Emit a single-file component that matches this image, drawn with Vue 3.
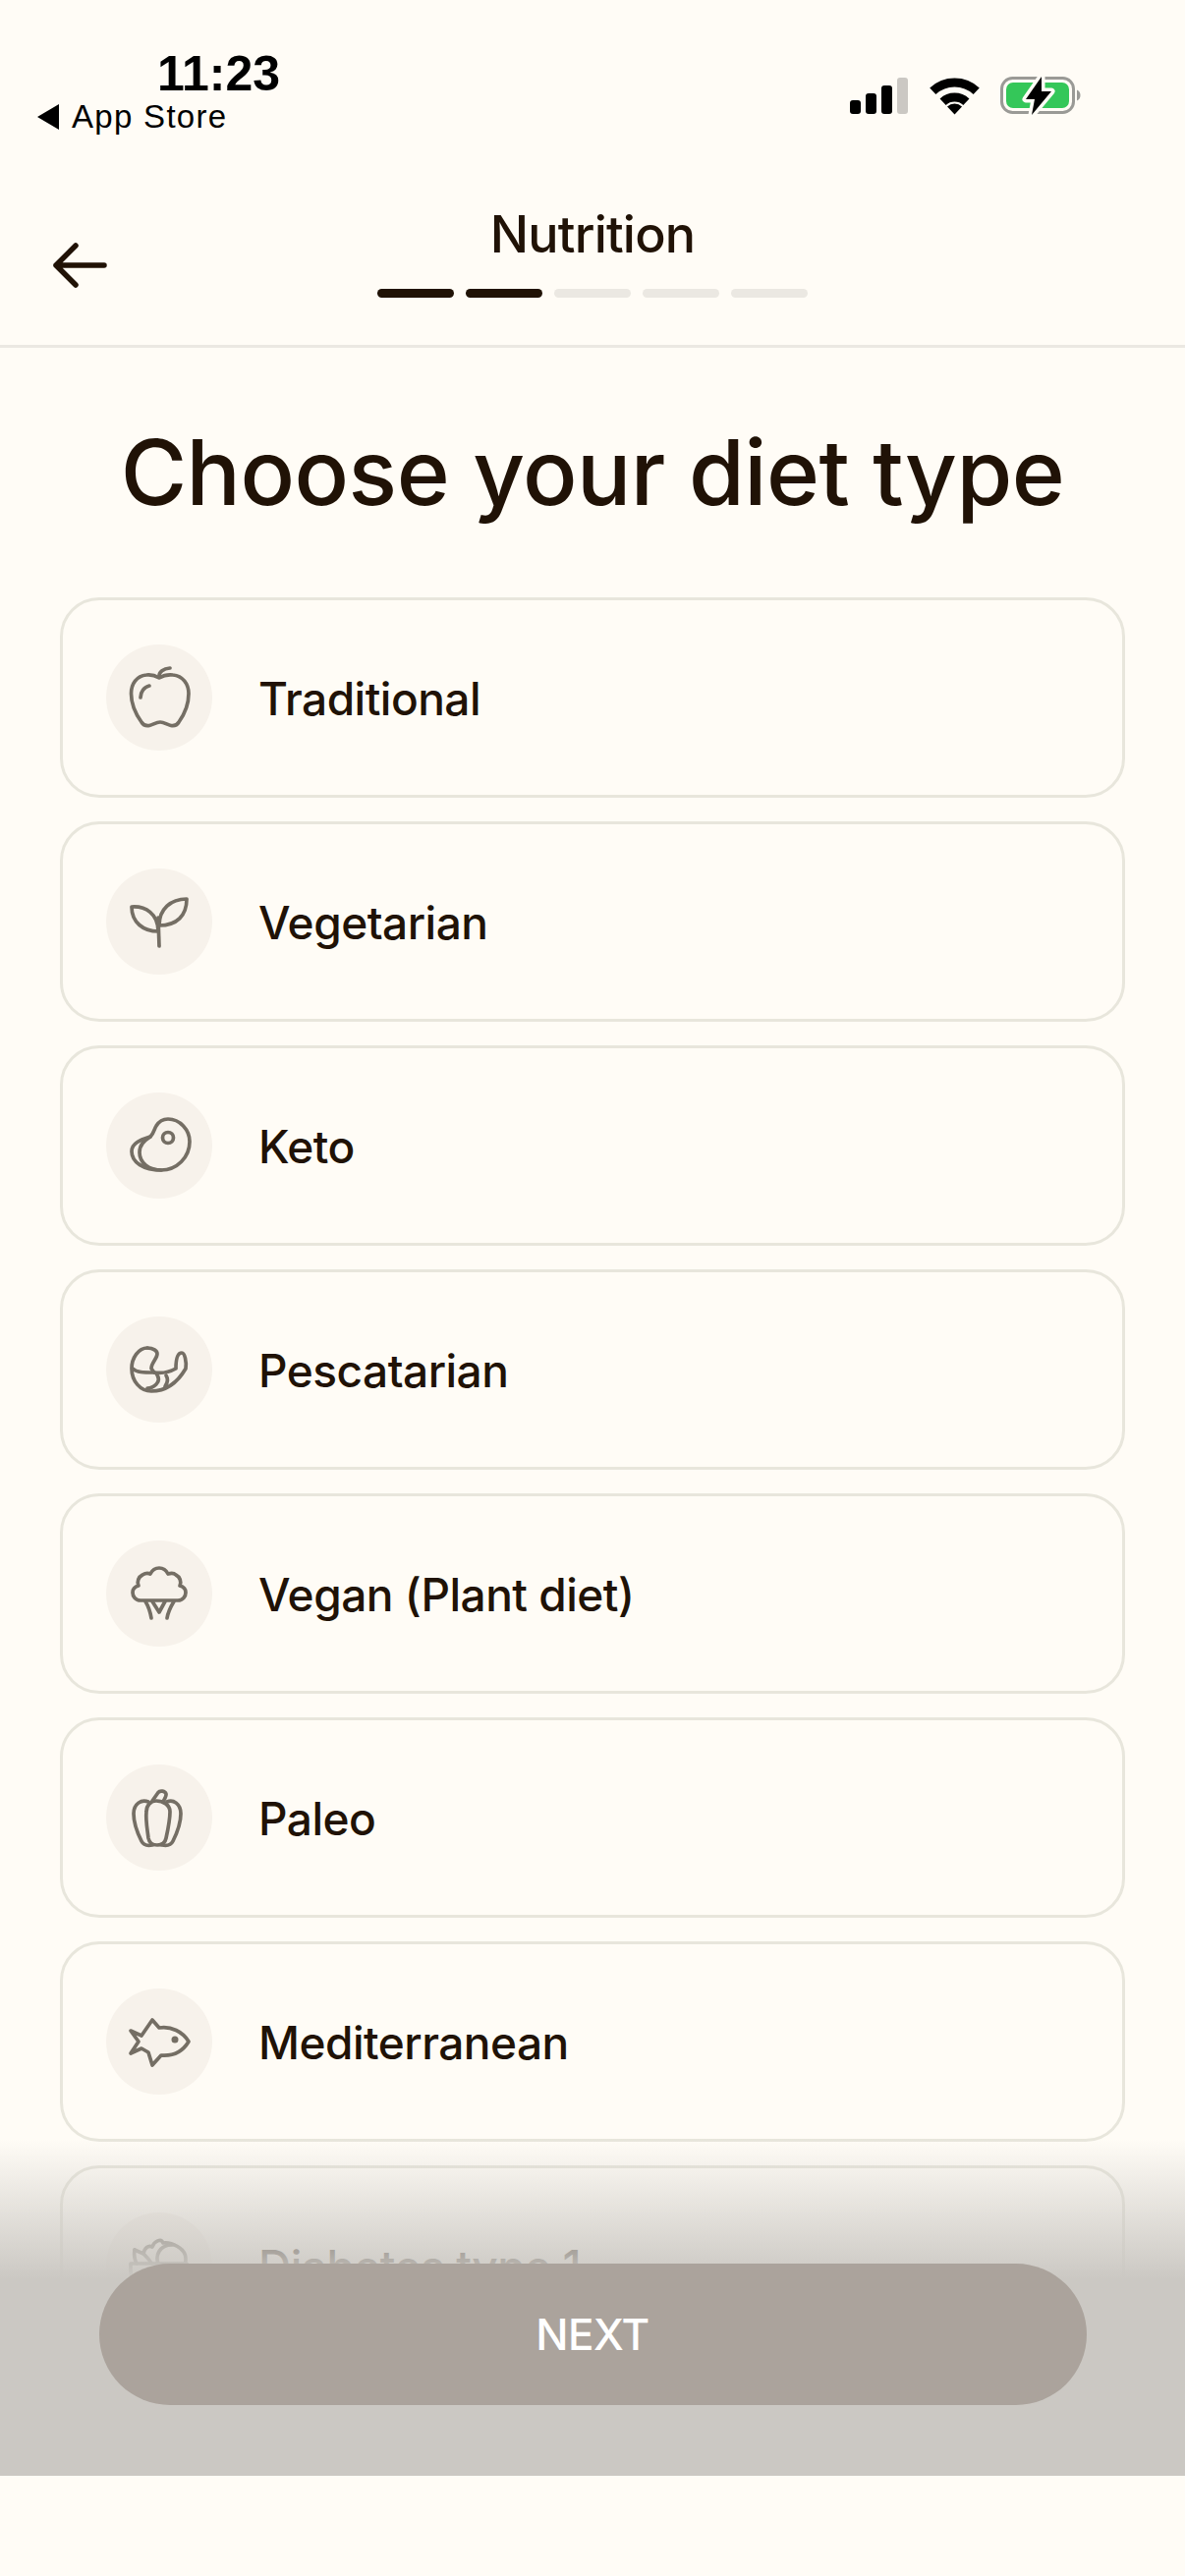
<template>
    <div class="page">
        <header class="top">
            <div class="status">
                <div class="status-left">
                    <div class="time">11:23</div>
                    <div class="back-app">
                        <span class="back-tri"></span>
                        <span>App Store</span>
                    </div>
                </div>
                <div class="status-right">
                    <div class="signal">
                        <i class="bar b1"></i>
                        <i class="bar b2"></i>
                        <i class="bar b3"></i>
                        <i class="bar b4"></i>
                    </div>
                    <svg class="wifi" width="51" height="38" viewBox="0 0 51 38">
                        <path d="M3.3 13.7A32.5 32.5 0 0 1 47.7 13.7" fill="none" stroke="#000" stroke-width="9" />
                        <path d="M13.6 24.7A17.5 17.5 0 0 1 37.4 24.7" fill="none" stroke="#000" stroke-width="9" />
                        <path d="M25.5 37.5L18 29.5A11 11 0 0 1 33 29.5Z" fill="#000" />
                    </svg>
                    <svg class="battery" width="84" height="48" viewBox="0 0 84 48">
                        <rect x="1.500" y="6.500" width="73" height="35" rx="11" fill="none" stroke="#9a9a96" stroke-width="3" />
                        <rect x="6" y="11" width="64" height="26" rx="7" fill="#34c759" />
                        <path d="M78 18.500C80.500 19.500 81.500 21.500 81.500 24C81.500 26.500 80.500 28.500 78 29.500Z" fill="#9a9a96" />
                        <path d="M42 5L26 28H35L32 44L52 20H42Z" fill="#000" stroke="#fffcf6" stroke-width="7" stroke-linejoin="round" paint-order="stroke" />
                    </svg>
                </div>
            </div>
            <nav class="nav">
                <svg class="arrow" width="60" height="48" viewBox="0 0 60 48">
                    <path d="M55 24H6M26 4L6 24L26 44" fill="none" stroke="#201206" stroke-width="5.500" stroke-linecap="round" stroke-linejoin="round" />
                </svg>
                <div class="nav-title">Nutrition</div>
                <div class="steps">
                    <i v-for="n in 5" :key="n" class="step" :class="{ done: n <= 2 }"></i>
                </div>
            </nav>
        </header>

        <main class="content">
            <h1 class="heading">Choose your diet type</h1>
            <div class="list">
                <div v-for="diet in diets" :key="diet.name" class="card">
                    <div class="icon-wrap">
                        <svg width="108" height="108" viewBox="0 0 108 108" fill="none" stroke="#746e64" stroke-width="3.700"
                            stroke-linecap="round" stroke-linejoin="round">
                            <path v-for="d in diet.paths" :key="d" :d="d" />
                            <circle v-if="diet.ring" :cx="diet.ring[0]" :cy="diet.ring[1]" :r="diet.ring[2]" />
                            <circle v-if="diet.dot" :cx="diet.dot[0]" :cy="diet.dot[1]" :r="diet.dot[2]" fill="#746e64" stroke="none" />
                        </svg>
                    </div>
                    <span class="card-label">{{ diet.name }}</span>
                </div>
            </div>
        </main>

        <footer class="bottom">
            <div class="fade">
                <button class="next">NEXT</button>
            </div>
            <div class="safe"></div>
        </footer>
    </div>
</template>

<script setup>
const diets = [
    {
        name: 'Traditional',
        paths: [
            'M54 34C49 31 45 30.500 41 31C31 32 25.500 40 25.500 50C25.500 61 31 72 36 79C38 82.500 41 83 44 82.500C48 81.500 51 79 55 79C59 79 62 81.500 66 82.500C69 83 72 82.500 74 79C79 72 84 61 84 50C84 40 78 32 68 31C64 30.500 59 31 54 34Z',
            'M54 32C54 28 58 24.500 65 24',
            'M35 54C35 48 39 43 44 42',
        ],
    },
    {
        name: 'Vegetarian',
        paths: [
            'M26 39C40 38 53 46 53 64C38 64 26 55 26 39Z',
            'M82 31C66 31 54 41 54 58C72 58 82 48 82 31Z',
            'M53 50L54 79',
        ],
    },
    {
        name: 'Keto',
        paths: [
            'M45 45C49 41 49 37 51 34C54 29 58 27 63 27C75 27 85 38 85 50C85 66 72 79 56 79C44 79 34 72 34 61C34 53 39 49 45 45Z',
            'M45 45C36 48 26 51 26 60C26 71 38 79 56 79',
        ],
        ring: [63, 46, 5.5],
    },
    {
        name: 'Pescatarian',
        paths: [
            'M42 32C33 32 26 42 26 53C26 66 35 76 46 76C58 76 71 70 81 53C82 46 80 37 77 37C72 37 71 44 71 53C62 58 56 58 49 57C38 57 31 57 27 53',
            'M42 32C48 32 52 35 52 38C52 43 46 47 46 53L49 57',
            'M51 58C54 62 54 66 51 69C48 72 45 73 42 73',
            'M61 60C63 63 63 67 60 71',
        ],
    },
    {
        name: 'Vegan (Plant diet)',
        paths: [
            'M35 61C30 61 27 57 27 53C27 49 29 47 33 46C31 42 33 37 37 35C40 33 43 33 45 34C47 30 50 28 54 28C58 28 61 30 63 34C66 33 69 33 71 35C75 37 77 42 75 46C79 47 81 49 81 53C81 57 78 61 73 61Z',
            'M40 62C43 67 45 73 46 79',
            'M69 62C66 67 63 73 62 79',
            'M47 62L54 73L60 62',
        ],
    },
    {
        name: 'Paleo',
        paths: [
            'M41 48C41 41 46 37 51 37C58 37 65 41 65 48C65 57 63 66 61 75C60 80 56 82 52 82C47 82 44 80 43 75C42 66 40 57 41 48Z',
            'M43 38C36 35 28 40 28 50C28 60 32 70 36 78C38 82 42 83 47 82',
            'M62 38C68 35 76 40 76 50C76 60 72 70 68 78C66 82 62 83 57 82',
            'M47 37L53 28.500C55 26 60 27 61 30C61.500 32 60 34 58 38',
        ],
    },
    {
        name: 'Mediterranean',
        paths: [
            'M25 43L36 48L47 32L54 40C66 38 78 44 84 54C78 64 68 69 56 68L47 78L43 65L36 61L25 66L33 54Z',
        ],
        dot: [70, 52, 3.5],
    },
    {
        name: 'Diabetes type 1',
        paths: [
            'M29 38L38 42C39 36 43 33 47 35C49 29 56 26 58 31C66 30 81 36 81 47C81 50 81 51 80 52',
            'M53 52C50 44 54 33 67 33',
            'M38 42C42 46 45 49 46 52',
            'M29 38C28 44 29 48 31 52',
            'M25 52H82V60C82 72 70 82 54 82C38 82 25 72 25 60Z',
        ],
    },
];
</script>

<style scoped>
.page {
    position: relative;
    width: 1206px;
    height: 2622px;
    overflow: hidden;
    background-color: #fffcf6;
    color: #201206;
    font-family: Inter, "Liberation Sans", sans-serif;
}

.top {
    border-bottom: 3px solid #ebe8e2;
}

.status {
    display: flex;
    justify-content: space-between;
    height: 190px;
    box-sizing: border-box;
    padding: 45px 0 0 38px;
    color: #000;
    font-family: "Liberation Sans", Arial, sans-serif;
}

.status-left {
    display: flex;
    flex-direction: column;
}

.time {
    margin-left: 122px;
    font-size: 50px;
    line-height: 60px;
    font-weight: 700;
}

.back-app {
    display: flex;
    align-items: center;
    gap: 13px;
    margin-top: -4px;
    font-size: 33px;
    line-height: 36px;
    letter-spacing: 1.300px;
}

.back-tri {
    width: 0;
    height: 0;
    border-top: 13px solid transparent;
    border-bottom: 13px solid transparent;
    border-right: 22px solid #000;
}

.status-right {
    display: flex;
    align-items: flex-start;
    padding: 33px 0 0;
    margin-right: 104px;
}

.signal {
    display: flex;
    align-items: flex-end;
    gap: 5px;
    height: 37px;
    margin-right: 22px;
    margin-top: 1px;
}

.bar {
    display: block;
    width: 11px;
    border-radius: 3px;
    background-color: #000;
}

.b1 { height: 14px; }
.b2 { height: 21px; }
.b3 { height: 29px; }
.b4 { height: 37px; background-color: #cbc8c3; }

.wifi {
    margin-top: 1px;
    margin-right: 21px;
}

.battery {
    margin-top: -5px;
}

.nav {
    position: relative;
    display: flex;
    flex-direction: column;
    align-items: center;
    height: 161px;
}

.arrow {
    position: absolute;
    left: 51px;
    top: 56px;
}

.nav-title {
    margin-top: 17px;
    font-size: 52px;
    line-height: 64px;
    font-weight: 450;
    letter-spacing: -0.800px;
}

.steps {
    display: flex;
    gap: 12px;
    margin-top: 23px;
}

.step {
    display: block;
    width: 78px;
    height: 9px;
    border-radius: 5px;
    background-color: #ebe8e2;
}

.step.done {
    background-color: #201206;
}

.content {
    padding: 0 61px;
}

.heading {
    margin: 65px 0 0;
    text-align: center;
    font-size: 92px;
    line-height: 124px;
    font-weight: 450;
    letter-spacing: -0.500px;
}

.list {
    display: flex;
    flex-direction: column;
    gap: 24px;
    margin-top: 65px;
}

.card {
    display: flex;
    flex-shrink: 0;
    align-items: center;
    gap: 47px;
    height: 204px;
    box-sizing: border-box;
    padding-left: 44px;
    border: 3px solid #e8e6dc;
    border-radius: 40px;
}

.icon-wrap {
    width: 108px;
    height: 108px;
    flex-shrink: 0;
    border-radius: 50%;
    background-color: #f7f2eb;
}

.icon-wrap svg {
    display: block;
}

.card-label {
    padding-top: 2px;
    font-size: 46px;
    font-weight: 450;
    letter-spacing: -0.500px;
}

.bottom {
    position: absolute;
    left: 0;
    right: 0;
    bottom: 0;
}

.fade {
    display: flex;
    justify-content: center;
    height: 343px;
    box-sizing: border-box;
    padding-top: 127px;
    background: linear-gradient(to bottom, rgba(203, 200, 195, 0), #cbc8c3 143px);
}

.next {
    width: 1005px;
    height: 144px;
    border: none;
    border-radius: 72px;
    background-color: #aba39c;
    color: #fff;
    font-family: inherit;
    font-size: 44px;
    font-weight: 500;
    letter-spacing: -0.500px;
}

.safe {
    height: 102px;
    background-color: #fffcf6;
}
</style>
